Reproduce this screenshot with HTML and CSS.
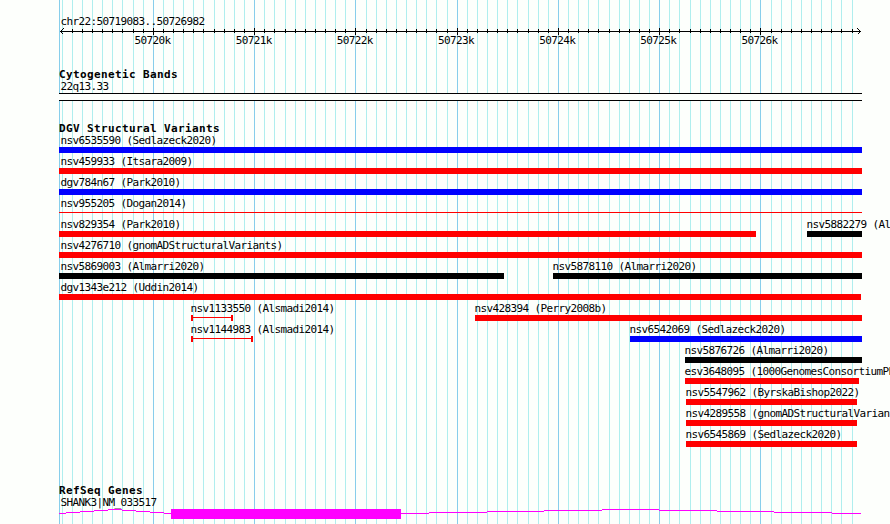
FILE: index.html
```html
<!DOCTYPE html>
<html lang="en">
<head>
<meta charset="utf-8">
<title>chr22:50719083..50726982</title>
<link rel="stylesheet" href="styles.css">
</head>
<body>
<svg class="gridlines" width="890" height="524" aria-hidden="true">
  <path class="minor" d="M62.5 0v524M72.5 0v524M82.5 0v524M92.5 0v524M102.5 0v524M112.5 0v524M122.5 0v524M133.5 0v524M143.5 0v524M163.5 0v524M173.5 0v524M183.5 0v524M193.5 0v524M203.5 0v524M214.5 0v524M224.5 0v524M234.5 0v524M244.5 0v524M264.5 0v524M274.5 0v524M285.5 0v524M295.5 0v524M305.5 0v524M315.5 0v524M325.5 0v524M335.5 0v524M345.5 0v524M366.5 0v524M376.5 0v524M386.5 0v524M396.5 0v524M406.5 0v524M416.5 0v524M426.5 0v524M436.5 0v524M447.5 0v524M467.5 0v524M477.5 0v524M487.5 0v524M497.5 0v524M507.5 0v524M517.5 0v524M528.5 0v524M538.5 0v524M548.5 0v524M568.5 0v524M578.5 0v524M588.5 0v524M598.5 0v524M609.5 0v524M619.5 0v524M629.5 0v524M639.5 0v524M649.5 0v524M669.5 0v524M679.5 0v524M690.5 0v524M700.5 0v524M710.5 0v524M720.5 0v524M730.5 0v524M740.5 0v524M750.5 0v524M771.5 0v524M781.5 0v524M791.5 0v524M801.5 0v524M811.5 0v524M821.5 0v524M831.5 0v524M841.5 0v524M852.5 0v524"/>
  <path class="major" d="M59.5 0v524M153.5 0v524M254.5 0v524M355.5 0v524M457.5 0v524M558.5 0v524M659.5 0v524M760.5 0v524"/>
</svg>
<main class="browser">
  <header class="scale">
    <div class="label">chr22:50719083..50726982</div>
    <svg class="ruler" width="803" height="7" viewBox="59 28 803 7">
      <path d="M60 31.5H861M63.5 28.5L60.5 31.5L63.5 34.5M857.5 28.5L860.5 31.5L857.5 34.5"/>
      <path d="M72.5 29v4M82.5 29v4M92.5 29v4M102.5 29v4M112.5 29v4M122.5 29v4M133.5 29v4M143.5 29v4M163.5 29v4M173.5 29v4M183.5 29v4M193.5 29v4M203.5 29v4M214.5 29v4M224.5 29v4M234.5 29v4M244.5 29v4M264.5 29v4M274.5 29v4M285.5 29v4M295.5 29v4M305.5 29v4M315.5 29v4M325.5 29v4M335.5 29v4M345.5 29v4M366.5 29v4M376.5 29v4M386.5 29v4M396.5 29v4M406.5 29v4M416.5 29v4M426.5 29v4M436.5 29v4M447.5 29v4M467.5 29v4M477.5 29v4M487.5 29v4M497.5 29v4M507.5 29v4M517.5 29v4M528.5 29v4M538.5 29v4M548.5 29v4M568.5 29v4M578.5 29v4M588.5 29v4M598.5 29v4M609.5 29v4M619.5 29v4M629.5 29v4M639.5 29v4M649.5 29v4M669.5 29v4M679.5 29v4M690.5 29v4M700.5 29v4M710.5 29v4M720.5 29v4M730.5 29v4M740.5 29v4M750.5 29v4M771.5 29v4M781.5 29v4M791.5 29v4M801.5 29v4M811.5 29v4M821.5 29v4M831.5 29v4M841.5 29v4M852.5 29v4"/>
      <path d="M153.5 28v7M254.5 28v7M355.5 28v7M457.5 28v7M558.5 28v7M659.5 28v7M760.5 28v7"/>
    </svg>
    <div class="ticks"><span>50720k</span><span>50721k</span><span>50722k</span><span>50723k</span><span>50724k</span><span>50725k</span><span>50726k</span></div>
  </header>

  <section class="track cyto">
    <h2>Cytogenetic Bands</h2>
    <div class="label">22q13.33</div>
    <div class="band"></div>
  </section>

  <section class="track variants">
    <h2>DGV Structural Variants</h2>
    <div class="lane"><div class="item clipped blue" style="width:803px"><span>nsv6535590 (Sedlazeck2020)</span><i></i></div></div>
    <div class="lane"><div class="item clipped red" style="width:803px"><span>nsv459933 (Itsara2009)</span><i></i></div></div>
    <div class="lane"><div class="item clipped blue" style="width:803px"><span>dgv784n67 (Park2010)</span><i></i></div></div>
    <div class="lane"><div class="item clipped red thin" style="width:803px"><span>nsv955205 (Dogan2014)</span><i></i></div></div>
    <div class="lane"><div class="item clipped red" style="width:697px"><span>nsv829354 (Park2010)</span><i></i></div><div class="item black" style="margin-left:51px;width:55px"><span>nsv5882279 (Almarri2020)</span><i></i></div></div>
    <div class="lane"><div class="item clipped red" style="width:803px"><span>nsv4276710 (gnomADStructuralVariants)</span><i></i></div></div>
    <div class="lane"><div class="item clipped black" style="width:445px"><span>nsv5869003 (Almarri2020)</span><i></i></div><div class="item black" style="margin-left:49px;width:309px"><span>nsv5878110 (Almarri2020)</span><i></i></div></div>
    <div class="lane"><div class="item clipped red" style="width:802px"><span>dgv1343e212 (Uddin2014)</span><i></i></div></div>
    <div class="lane"><div class="item range" style="margin-left:132px;width:42px"><span>nsv1133550 (Alsmadi2014)</span><i></i></div><div class="item red" style="margin-left:242px;width:387px"><span>nsv428394 (Perry2008b)</span><i></i></div></div>
    <div class="lane"><div class="item range" style="margin-left:132px;width:62px"><span>nsv1144983 (Alsmadi2014)</span><i></i></div><div class="item blue" style="margin-left:377px;width:232px"><span>nsv6542069 (Sedlazeck2020)</span><i></i></div></div>
    <div class="lane"><div class="item black" style="margin-left:626px;width:177px"><span>nsv5876726 (Almarri2020)</span><i></i></div></div>
    <div class="lane"><div class="item red" style="margin-left:626px;width:174px"><span>esv3648095 (1000GenomesConsortiumPhase3)</span><i></i></div></div>
    <div class="lane"><div class="item red" style="margin-left:627px;width:171px"><span>nsv5547962 (ByrskaBishop2022)</span><i></i></div></div>
    <div class="lane"><div class="item red" style="margin-left:627px;width:171px"><span>nsv4289558 (gnomADStructuralVariants)</span><i></i></div></div>
    <div class="lane"><div class="item red" style="margin-left:627px;width:171px"><span>nsv6545869 (Sedlazeck2020)</span><i></i></div></div>
  </section>

  <section class="track genes">
    <h2>RefSeq Genes</h2>
    <div class="label">SHANK3|NM_033517</div>
    <svg class="gene" width="803" height="10" viewBox="59 509 803 10">
      <path d="M59 513.5h7M66 512.5h14M80 511.5h14M94 510.5h14M108 509.5h14M122 510.5h14M136 511.5h14M150 512.5h14M164 513.5h7M401 513.5h28M429 512.5h58M487 511.5h57M544 510.5h58M602 509.5h57M659 510.5h58M717 511.5h57M774 512.5h58M832 513.5h29"/>
      <rect x="171" y="509" width="230" height="10"/>
    </svg>
  </section>
</main>
</body>
</html>
```
FILE: styles.css
```css
html, body {
  margin: 0;
  height: 524px;
  overflow: hidden;
  background: #fdfffc;
}

body {
  position: relative;
  color: #000;
  font: 11px/13px "DejaVu Sans Mono", monospace;
  letter-spacing: -0.622px;
}

svg { display: block; }

/* Vertical coordinate lines run underneath every track */
.gridlines {
  position: absolute;
  inset: 0;
  fill: none;
  shape-rendering: crispEdges;
}
.minor { stroke: #afeeee; }
.major { stroke: #87ceeb; }

.browser {
  position: relative;
  width: 803px;
  padding: 15px 0 0 59px;
}

.label {
  height: 13px;
  padding-left: 1.4px;
  white-space: nowrap;
}

.ruler {
  fill: none;
  stroke: #000;
  shape-rendering: crispEdges;
}

.ticks {
  display: flex;
  justify-content: space-between;
  width: 643px;
  height: 13px;
  margin: -1px 0 0 75.5px;
}
.ticks span { width: 36px; white-space: nowrap; }

.track h2 {
  height: 12px;
  margin: 0;
  font-size: 11px;
  font-weight: bold;
  line-height: 13px;
  letter-spacing: 0.378px;
}

.cyto { margin-top: 21px; }
.band {
  height: 6px;
  border: solid #000;
  border-width: 1px 0;
  background: #fdfffc;
}

.variants { margin-top: 21px; }
.lane {
  display: flex;
  height: 21px;
}
.item { flex: none; }
.item span {
  display: block;
  width: 0;
  height: 13px;
  margin-left: -0.5px;
  white-space: nowrap;
}
.item.clipped span { margin-left: 1.4px; }
.item i {
  display: block;
  box-sizing: border-box;
  height: 6px;
}
.blue i { background: #00f; }
.red i { background: #f00; }
.black i { background: #000; }
.thin i { height: 1px; margin-top: 2px; }
.range i {
  border: solid #f00;
  border-width: 0 2px;
  background: linear-gradient(#f00, #f00) 0 2px / 100% 1px no-repeat;
}

.genes { margin-top: 35px; }
.gene {
  fill: #f0f;
  stroke: #f0f;
  shape-rendering: crispEdges;
}
.gene rect { stroke: none; }
```
